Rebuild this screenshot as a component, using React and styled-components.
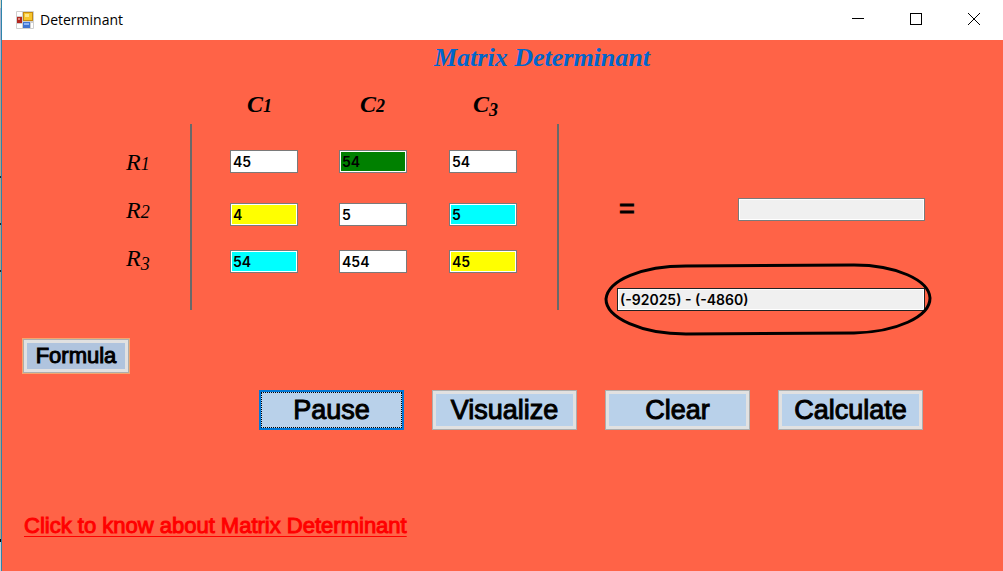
import React from "react";
import styled, { createGlobalStyle } from "styled-components";

const GlobalStyle = createGlobalStyle`
  *, *::before, *::after { box-sizing: border-box; }
  body { margin: 0; background: #ff6347; }
  button, input { margin: 0; border-radius: 0; }
`;

const ui = `"Microsoft Sans Serif", "Liberation Sans", Arial, sans-serif`;
const script = `"Monotype Corsiva", "Liberation Serif", serif`;

const Window = styled.div`
  display: flex;
  min-height: 100vh;
  color: #000;
  font-family: ${ui};
`;

const DesktopEdge = styled.div`
  flex: 0 0 2px;
  border-right: 1px solid #2d84ab;
  background: linear-gradient(
    #d8d8c8 0 8px, #a9b4cf 8px 60px, #b39f85 60px 176px,
    #222 176px 178px, #b39f85 178px 223px, #222 223px 225px, #b39f85 225px 270px,
    #222 270px 272px, #b39f85 272px 539px, #000 539px 542px, #c8cdd4 542px
  );
`;

const Frame = styled.div`
  flex: 1;
  min-width: 0;
  display: flex;
  flex-direction: column;
`;

const TitleBar = styled.header`
  display: flex;
  align-items: center;
  height: 40px;
  padding-left: 14px;
  background: #fff;
`;

const AppIcon = styled.svg`
  width: 18px;
  height: 18px;
  margin-right: 6px;
`;

const Caption = styled.span`
  flex: 1;
  font: 14px/20px "Segoe UI", "Open Sans", sans-serif;
`;

const CaptionButton = styled.button`
  width: 58px;
  height: 40px;
  padding: 0 0 2px;
  border: 0;
  background: transparent;
  display: grid;
  place-items: center;
`;

const Client = styled.main`
  flex: 1;
  padding: 2px 78px 24px 20px;
  background: #ff6347;
`;

const Heading = styled.h1`
  margin: 0 0 0 412px;
  font: italic bold 26px/32px ${script};
  color: #0066cc;
`;

const Workspace = styled.section`
  display: flex;
`;

const RowLabels = styled.div`
  width: 64px;
  margin: 64px 0 0 104px;
`;

const AxisLabel = styled.span`
  display: block;
  font: italic ${(p) => (p.$bold ? "bold" : "normal")} 24px/${(p) => (p.$bold ? 32 : 48)}px ${script};
  text-align: ${(p) => (p.$bold ? "center" : "left")};
`;

const Figure = styled.span`
  font-size: 18px;
  line-height: 1;
  vertical-align: ${(p) => (p.$descends ? "-4px" : "baseline")};
`;

const Matrix = styled.div`
  flex: 0 0 369px;
`;

const ColumnLabels = styled.div`
  display: grid;
  grid-template-columns: repeat(3, 113px);
  margin-left: 13px;
  padding: 14px 0 4px;
`;

const Bars = styled.div`
  display: grid;
  grid-template-columns: 109px 110px 68px;
  grid-template-rows: 53px 47px 47px;
  height: 186px;
  padding: 26px 0 0 38px;
  border: solid #696969;
  border-width: 0 2px;
`;

const Field = styled.input`
  display: block;
  width: ${(p) => p.$width || "100%"};
  height: 23px;
  padding: 0 2px;
  border: 1px solid ${(p) => p.$edge || "#7a7a7a"};
  outline: 0;
  box-shadow: inset 0 0 0 1px #fff;
  background: ${(p) => p.$fill || "#fff"};
  color: #000;
  font: 600 14px/20px Inter, sans-serif;
`;

const Results = styled.div`
  flex: 1;
  padding: 124px 0 0 58px;
`;

const ResultRow = styled.div`
  display: flex;
  align-items: center;
  justify-content: space-between;
  padding-left: 2px;
  font-size: 27px;
  line-height: 23px;
  -webkit-text-stroke: 1px #000;

  input { -webkit-text-stroke: 0; }
`;

const Expression = styled.div`
  position: relative;
  margin-top: 67px;
`;

const Ring = styled.svg`
  position: absolute;
  left: -13px;
  top: -26px;
  width: calc(100% + 20px);
  height: 74px;
  pointer-events: none;
`;

const PushButton = styled.button`
  width: 145px;
  height: 40px;
  padding: 0;
  border: 1px solid #adadad;
  box-shadow: inset 0 0 0 3px #e1e1e1;
  background: #b9d1ea;
  color: #000;
  font: 27px/36px ${ui};
  -webkit-text-stroke: 1px #000;
`;

const FocusedButton = styled(PushButton)`
  border: 2px solid #0078d7;
  box-shadow: none;
  outline: 1px dotted #000;
  outline-offset: -3px;
`;

const FormulaButton = styled(PushButton)`
  width: 106px;
  height: 34px;
  margin: 28px 0 0 1px;
  box-shadow: inset 0 0 0 3px #e1e1e1, 0 0 0 1px #f4a770;
  background: #b0c4de;
  font-size: 22px;
  line-height: 28px;
`;

const Actions = styled.div`
  display: flex;
  gap: 28px;
  margin: 17px 0 0 237px;
`;

const HelpLink = styled.a`
  display: inline-block;
  margin: 82px 0 0 2px;
  color: #ff0000;
  font-size: 22px;
  line-height: 28px;
  -webkit-text-stroke: 1px #ff0000;
  text-decoration: underline;
  text-decoration-thickness: 1px;
  text-underline-offset: 3px;
`;

const cells = [
  ["45", "54", "54"],
  ["4", "5", "5"],
  ["54", "454", "45"],
];
const fills = [
  ["#fff", "#008000", "#fff"],
  ["#ffff00", "#fff", "#00ffff"],
  ["#00ffff", "#fff", "#ffff00"],
];

function Label({ letter, n, bold }) {
  return (
    <AxisLabel $bold={bold}>
      {letter}
      <Figure $descends={n === 3}>{n}</Figure>
    </AxisLabel>
  );
}

export default function App() {
  return (
    <>
      <GlobalStyle />
      <Window>
        <DesktopEdge />
        <Frame>
          <TitleBar>
            <AppIcon viewBox="0 0 18 18" aria-hidden="true">
              <rect width="18" height="18" rx="1" fill="#cfcfcf" />
              <path d="M1 1h5v4H1zM1 13h5v4H1zM15 12h2v5h-2z" fill="#fff" />
              <rect x="1" y="6" width="5" height="6" fill="#b3261e" />
              <rect x="2" y="7" width="2" height="2" fill="#e28a80" />
              <rect x="7" y="1" width="10" height="9" fill="#c58a10" />
              <rect x="8" y="2" width="8" height="7" fill="#f7c52c" />
              <rect x="9" y="3" width="4" height="3" fill="#fde68a" />
              <rect x="7" y="11" width="7" height="6" fill="#3f74d1" />
              <rect x="8" y="12" width="5" height="2" fill="#8db4f5" />
            </AppIcon>
            <Caption>Determinant</Caption>
            <CaptionButton aria-label="Minimize">
              <svg width="12" height="12" stroke="#000" shapeRendering="crispEdges"><path d="M0 5.5h12" /></svg>
            </CaptionButton>
            <CaptionButton aria-label="Maximize">
              <svg width="12" height="12" stroke="#000" fill="none" shapeRendering="crispEdges"><path d="M.5.5h11v11H.5z" /></svg>
            </CaptionButton>
            <CaptionButton aria-label="Close">
              <svg width="12" height="12" stroke="#000"><path d="M0 0l12 12M12 0L0 12" /></svg>
            </CaptionButton>
          </TitleBar>
          <Client>
            <Heading>Matrix Determinant</Heading>
            <Workspace>
              <RowLabels>
                {[1, 2, 3].map((n) => <Label key={n} letter="R" n={n} />)}
              </RowLabels>
              <Matrix>
                <ColumnLabels>
                  {[1, 2, 3].map((n) => <Label key={n} letter="C" n={n} bold />)}
                </ColumnLabels>
                <Bars>
                  {cells.map((row, r) =>
                    row.map((value, c) => (
                      <Field
                        key={`${r}${c}`}
                        aria-label={`Row ${r + 1}, column ${c + 1}`}
                        defaultValue={value}
                        $width="68px"
                        $fill={fills[r][c]}
                      />
                    ))
                  )}
                </Bars>
              </Matrix>
              <Results>
                <ResultRow>
                  <span>=</span>
                  <Field aria-label="Determinant" readOnly $width="187px" $fill="#f0f0f0" />
                </ResultRow>
                <Expression>
                  <Field
                    aria-label="Expression"
                    readOnly
                    value="(-92025) - (-4860)"
                    $fill="#f0f0f0"
                    $edge="#222"
                  />
                  <Ring viewBox="0 0 328 74" preserveAspectRatio="none" fill="none" stroke="#000" strokeWidth="3">
                    <path d="M2 37C4 18 38 4 82 4L250 3C292 3 325 18 326 36C326 55 292 70 250 71L82 72C38 72 2 56 2 37Z" />
                  </Ring>
                </Expression>
              </Results>
            </Workspace>
            <FormulaButton>Formula</FormulaButton>
            <Actions>
              <FocusedButton>Pause</FocusedButton>
              <PushButton>Visualize</PushButton>
              <PushButton>Clear</PushButton>
              <PushButton>Calculate</PushButton>
            </Actions>
            <HelpLink href="#determinant">Click to know about Matrix Determinant</HelpLink>
          </Client>
        </Frame>
      </Window>
    </>
  );
}
